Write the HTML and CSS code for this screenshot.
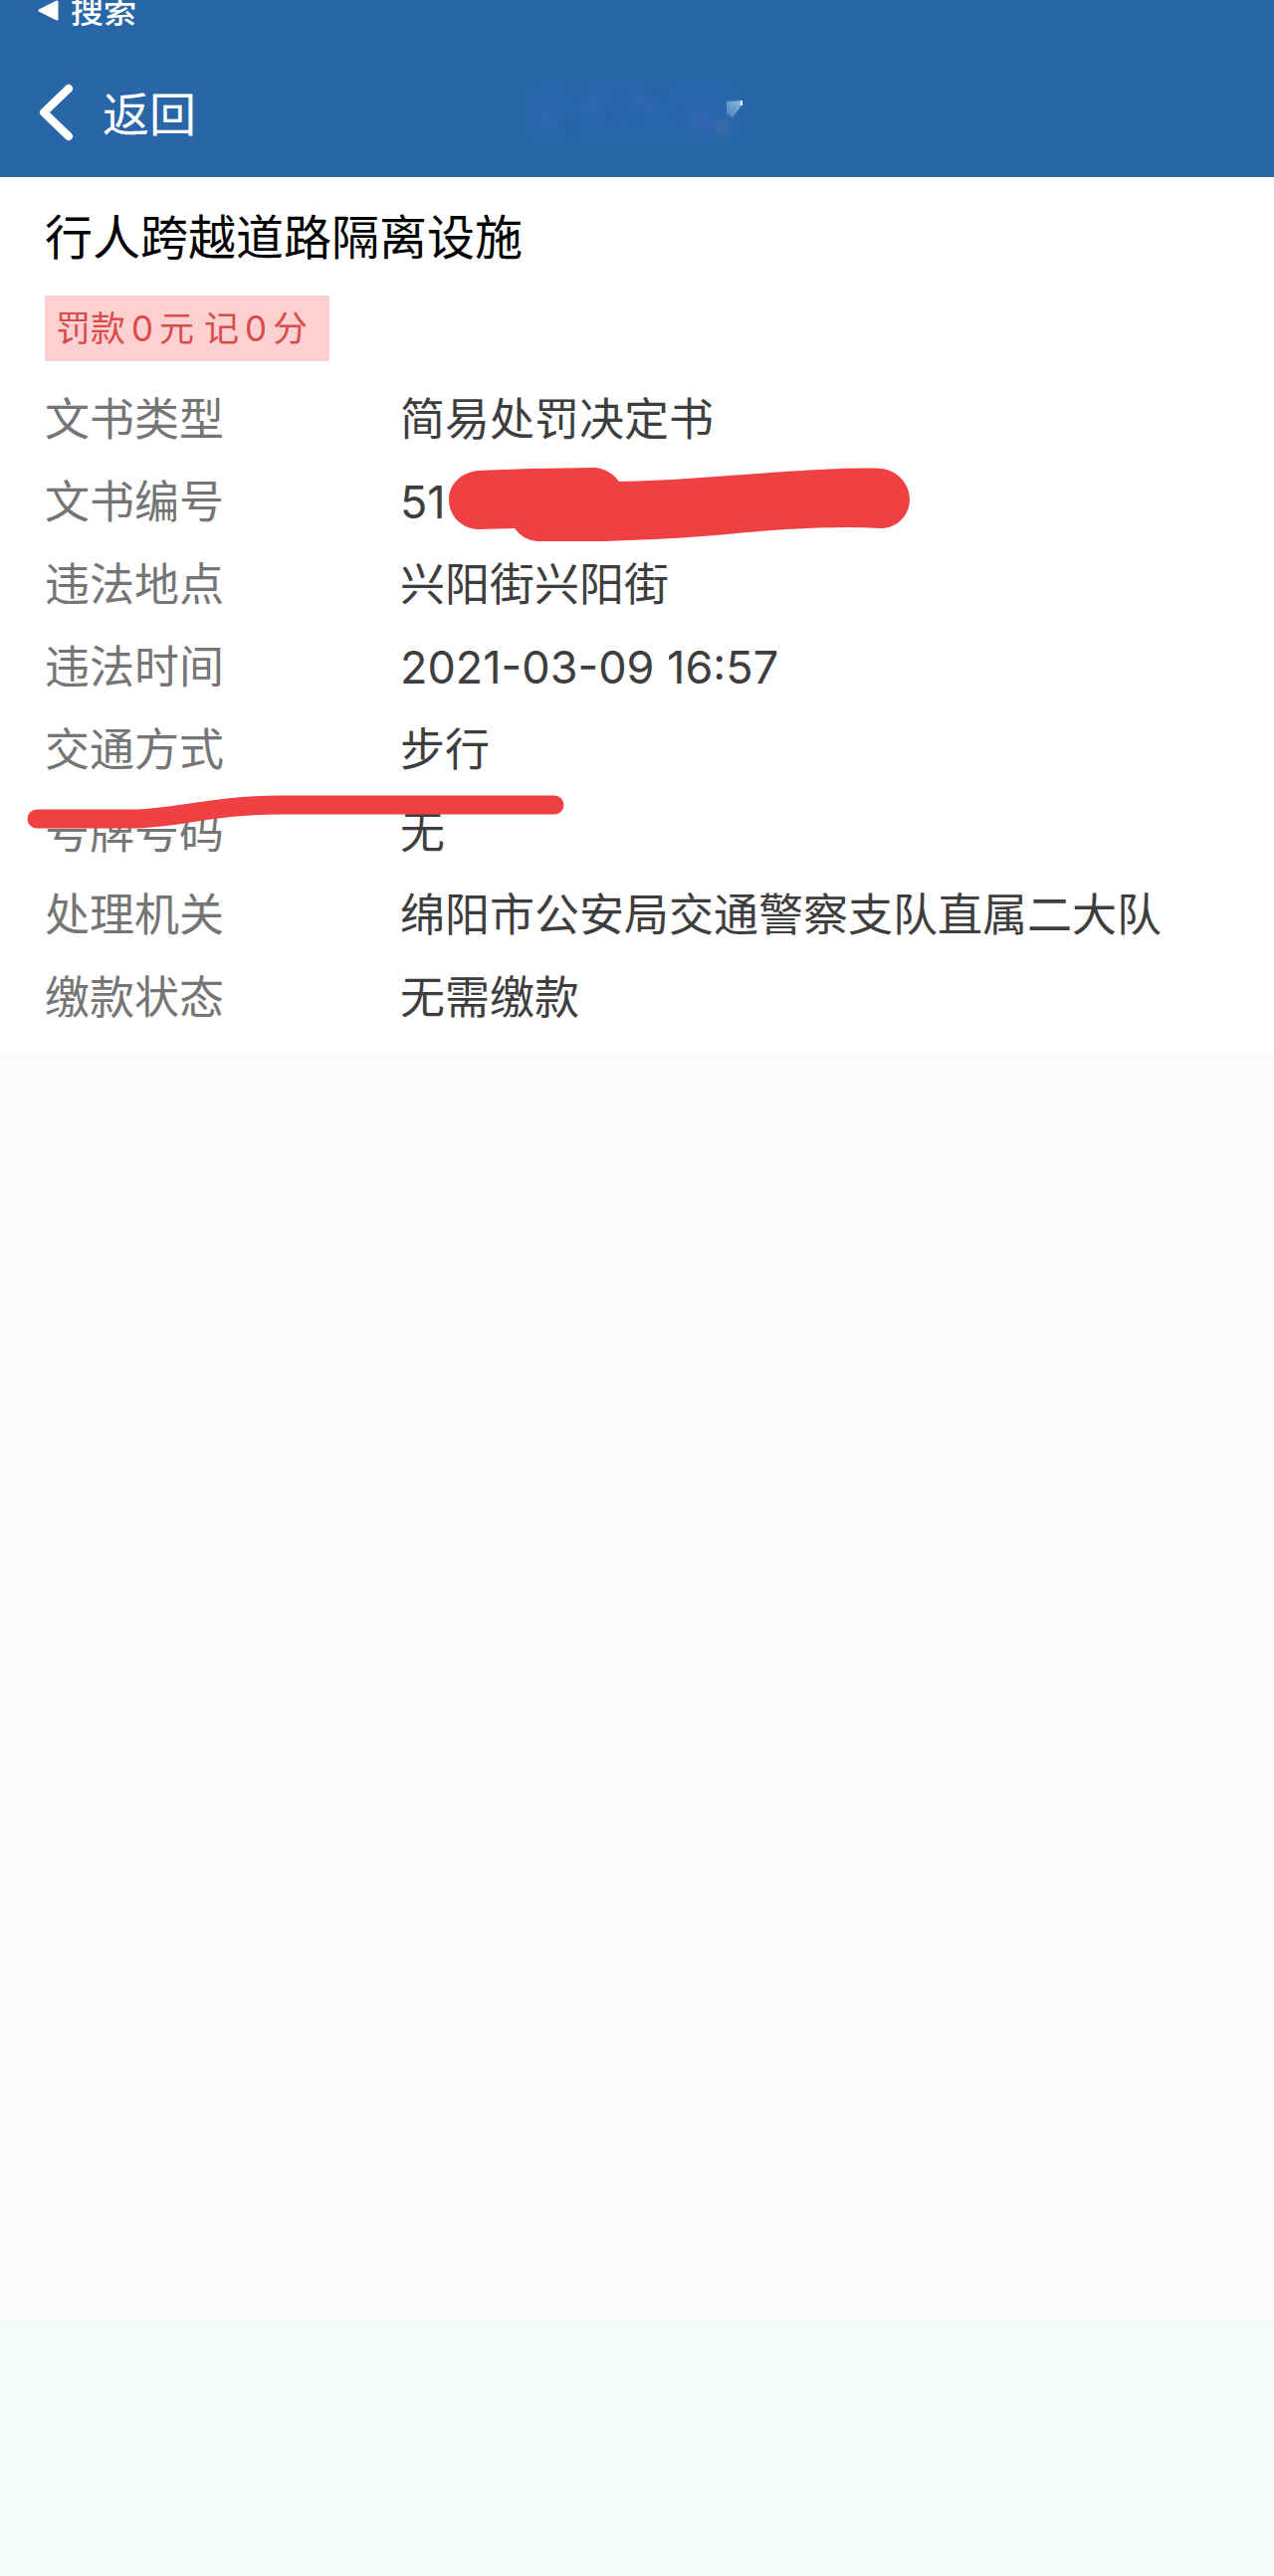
FILE: index.html
```html
<!DOCTYPE html>
<html lang="zh-CN">
<head>
<meta charset="utf-8">
<meta name="viewport" content="width=device-width, initial-scale=1">
<title>行人跨越道路隔离设施</title>
<link rel="stylesheet" href="styles.css">
</head>
<body>
<header class="header">
  <a class="status-link" href="#search">
    <svg class="status-arrow" viewBox="0 0 22 22" aria-hidden="true"><path d="M3 10.500 20 2V19Z"/></svg>
    <span>搜索</span>
  </a>
  <nav class="nav">
    <button class="back" type="button">
      <svg class="back-icon" viewBox="0 0 36 60" aria-hidden="true"><path d="M31 5 6 29 31 53"/></svg>
      <span>返回</span>
    </button>
    <svg class="nav-smudge" viewBox="0 0 220 68" aria-hidden="true">
      <defs>
        <filter id="soft" x="-20%" y="-20%" width="140%" height="140%"><feGaussianBlur stdDeviation="4"/></filter>
        <linearGradient id="glint" x1="0" x2="1" y1="1" y2="0"><stop offset="0" stop-color="#4583be"/><stop offset="1" stop-color="#8db9dc"/></linearGradient>
      </defs>
      <g filter="url(#soft)">
        <path fill="#2a68b4" d="M6 12H210V58H6Z" opacity=".5"/>
        <g fill="#265f9f" opacity=".8">
          <ellipse cx="44" cy="48" rx="9" ry="9"/><ellipse cx="84" cy="38" rx="9" ry="7"/>
          <ellipse cx="96" cy="22" rx="9" ry="6"/><ellipse cx="133" cy="14" rx="10" ry="6"/>
          <ellipse cx="110" cy="42" rx="7" ry="7"/><ellipse cx="152" cy="38" rx="8" ry="6"/>
          <ellipse cx="50" cy="16" rx="7" ry="6"/>
        </g>
        <ellipse fill="#50709c" cx="196" cy="50" rx="7" ry="7" opacity=".5"/>
        <g fill="#4065b8" opacity=".35">
          <ellipse cx="18" cy="44" rx="7" ry="9"/><ellipse cx="66" cy="28" rx="8" ry="8"/>
          <ellipse cx="118" cy="24" rx="8" ry="7"/><ellipse cx="174" cy="46" rx="8" ry="9"/>
        </g>
      </g>
      <path fill="url(#glint)" d="M200 24 215 23V28L206 40 200 36Z"/>
      <path fill="#e8f5fb" d="M214 23H216V28H214Z"/>
    </svg>
  </nav>
</header>
<main class="record">
  <h1 class="title">行人跨越道路隔离设施</h1>
  <p class="badge">罚款<span class="count">0</span>元 记<span class="count">0</span>分</p>
  <dl class="details">
    <div class="row"><dt>文书类型</dt><dd>简易处罚决定书</dd></div>
    <div class="row"><dt>文书编号</dt><dd>51<svg class="redaction" viewBox="0 0 464 76" aria-hidden="true"><path d="M30 3 82 1 148 0C158 1 166 6 172 14 235 13 300 6 357 3 390 1 415 0 437 1 453 4 464 17 464 32 464 48 451 61 435 61 405 59 375 60 340 62 295 65 255 70 207 72L157 74H90C80 73 73 69 67 61L30 62C13 61 1 48 1 32 1 17 13 5 30 3Z"/></svg></dd></div>
    <div class="row"><dt>违法地点</dt><dd>兴阳街兴阳街</dd></div>
    <div class="row"><dt>违法时间</dt><dd>2021-03-09 16:57</dd></div>
    <div class="row"><dt>交通方式</dt><dd>步行</dd></div>
    <div class="row"><dt>号牌号码</dt><dd>无</dd><svg class="underline" viewBox="0 0 540 40" aria-hidden="true"><path d="M10 27H104C150 27 185 13 255 13H530"/></svg></div>
    <div class="row"><dt>处理机关</dt><dd>绵阳市公安局交通警察支队直属二大队</dd></div>
    <div class="row"><dt>缴款状态</dt><dd>无需缴款</dd></div>
  </dl>
</main>
</body>
</html>
```
FILE: styles.css
```css
* {
  box-sizing: border-box;
}

body {
  margin: 0;
  min-height: 100vh;
  background: linear-gradient(#f8fafb, #f9fbfd 90%, #f5f9fa 90%);
  color: #3e3e3e;
  font-family: Inter, "Noto Sans CJK SC", sans-serif;
  font-size: 45px;
  line-height: 63px;
}

.header {
  background: #2966a8;
  color: #fff;
}

.status-link {
  display: flex;
  align-items: center;
  gap: 12px;
  height: 22px;
  padding-left: 37px;
  color: inherit;
  font-size: 33px;
  font-weight: 500;
  line-height: 22px;
  text-decoration: none;
}

.status-arrow {
  width: 22px;
  height: 22px;
  fill: #fff;
  stroke: #fff;
  stroke-width: 3;
  stroke-linejoin: round;
}

.nav {
  position: relative;
  display: flex;
  align-items: center;
  margin-top: 28px;
  height: 128px;
  padding-left: 38px;
}

.back {
  display: flex;
  align-items: center;
  gap: 29px;
  padding: 0;
  border: 0;
  background: none;
  color: inherit;
  font: inherit;
  font-size: 47px;
}

.back-icon {
  width: 36px;
  height: 60px;
  fill: none;
  stroke: #fff;
  stroke-width: 8;
  stroke-linecap: round;
  stroke-linejoin: round;
}

.nav-smudge {
  position: absolute;
  top: 28px;
  left: 50%;
  width: 220px;
  height: 68px;
  margin-left: -110px;
}

.record {
  padding: 25px 45px;
  background: #fff;
}

.title {
  margin: 0 0 22px;
  color: #000;
  font-size: 48px;
  font-weight: 400;
  line-height: 72px;
}

.badge {
  width: fit-content;
  margin: 0 0 27px;
  padding: 0 22px 0 11px;
  background: #ffd0d1;
  color: #d94c4c;
  font-size: 35px;
  line-height: 66px;
}

.count {
  margin: 0 6px;
}

.details {
  display: grid;
  gap: 20px;
  margin: 0;
}

.row {
  position: relative;
  display: grid;
  grid-template-columns: 357px 1fr;
}

.row dt {
  color: #757575;
}

.row dd {
  position: relative;
  margin: 0;
}

.redaction {
  position: absolute;
  top: -3px;
  left: 48px;
  width: 464px;
  height: 76px;
  fill: #ef4143;
}

.underline {
  position: absolute;
  top: -9px;
  left: -18px;
  width: 540px;
  height: 40px;
  fill: none;
  stroke: #ef4143;
  stroke-width: 19;
  stroke-linecap: round;
}
```
